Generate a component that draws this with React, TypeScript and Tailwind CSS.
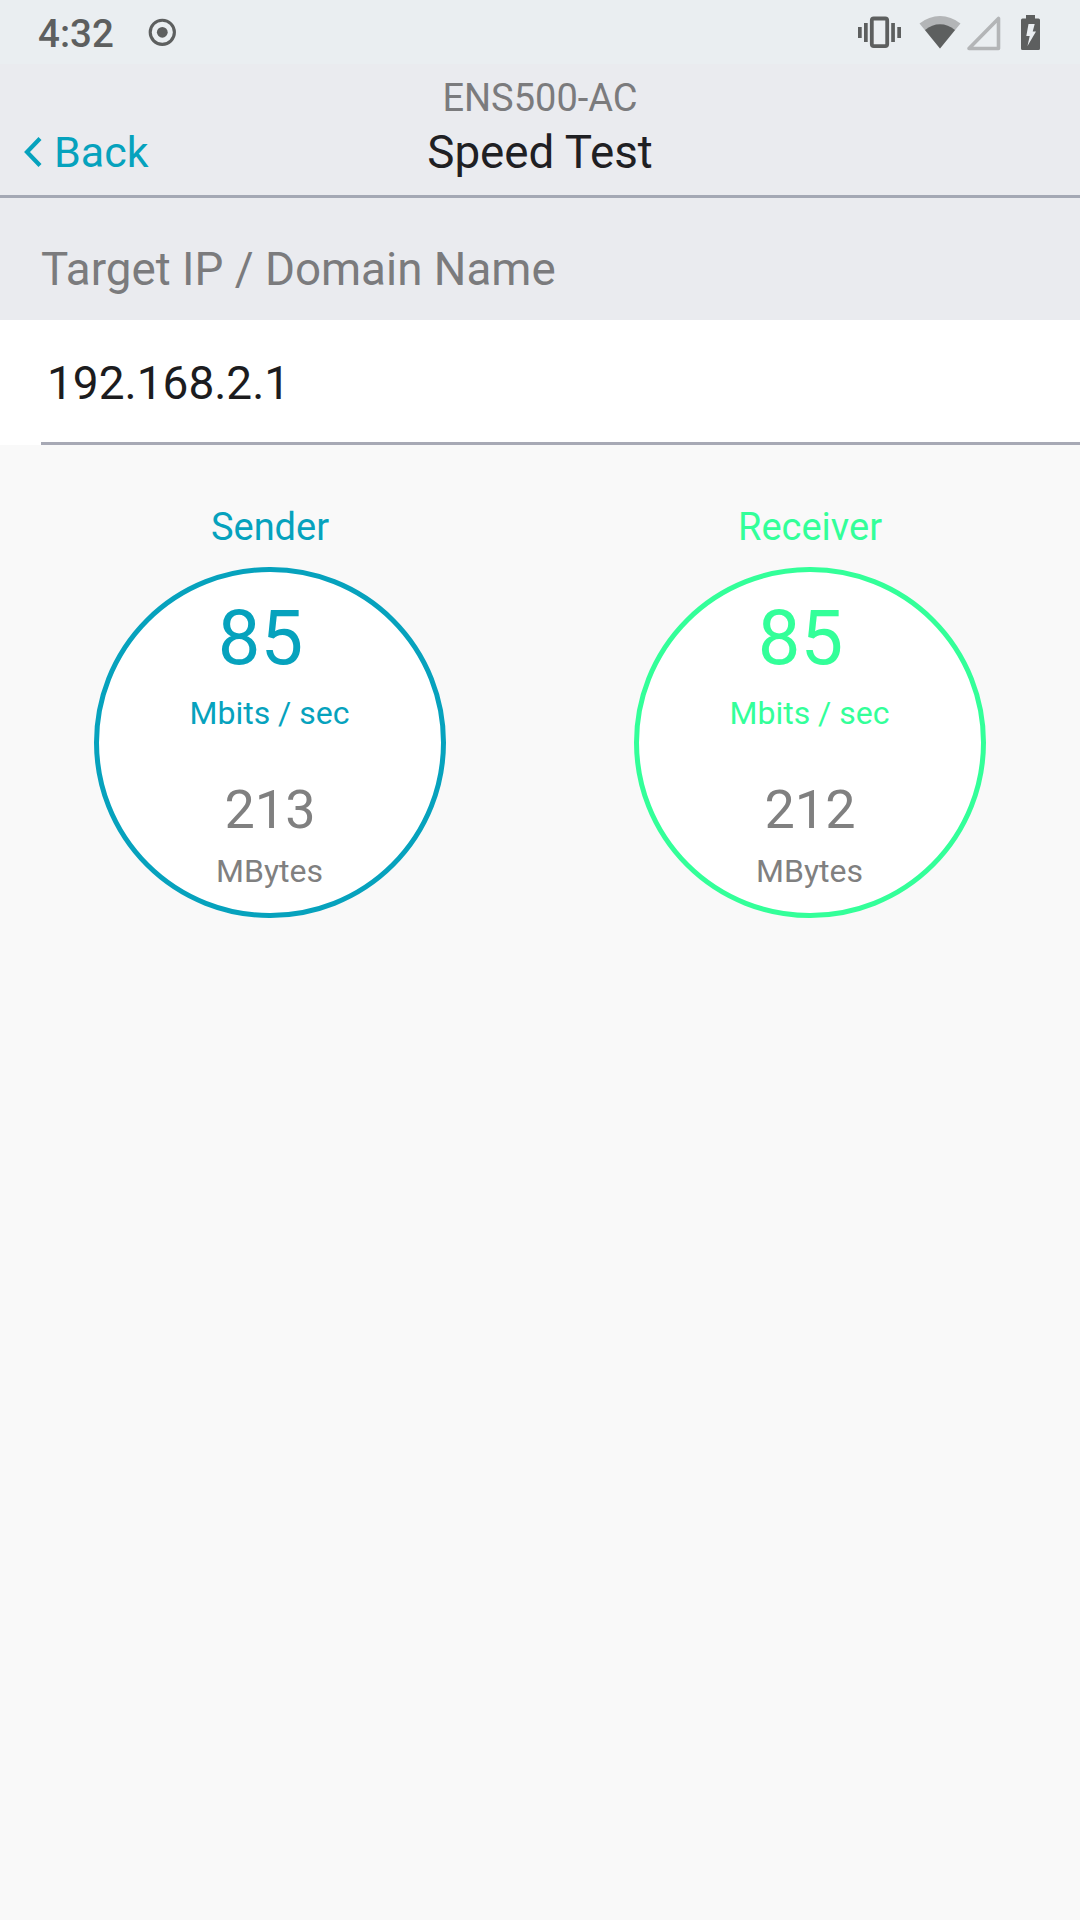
import React from 'react';

const results = [
  { title: 'Sender', rate: '85', total: '213', text: 'text-[#06a2bd]', border: 'border-[#06a2bd]' },
  { title: 'Receiver', rate: '85', total: '212', text: 'text-[#33ff99]', border: 'border-[#33ff99]' },
];

function StatusBar() {
  return (
    <div className="flex h-16 items-start bg-[#eaeef1] pl-[38px] pr-[40px] text-[#5d5f5f]">
      <span className="mt-[12px] text-[38.5px] font-medium leading-[44px]">4:32</span>
      <svg className="ml-[34px] mt-[18px]" width="28" height="28" viewBox="0 0 28 28">
        <circle cx="14.3" cy="14.3" r="12.1" fill="none" stroke="currentColor" strokeWidth="3.1" />
        <circle cx="14.3" cy="14.3" r="5.4" fill="currentColor" />
      </svg>

      <div className="ml-auto flex">
        {/* Vibrate */}
        <svg width="44" height="64" viewBox="858 0 44 64" fill="currentColor">
          <rect x="871.8" y="18.5" width="15.4" height="27.6" rx="2" fill="none" stroke="currentColor" strokeWidth="3.8" />
          <rect x="864" y="23" width="3.7" height="19" />
          <rect x="891.2" y="23" width="3.7" height="19" />
          <rect x="858" y="27" width="3.7" height="11" />
          <rect x="897.3" y="27" width="3.7" height="11" />
        </svg>
        {/* Wifi */}
        <svg className="ml-[17px]" width="42" height="64" viewBox="919 0 42 64">
          <path d="M940 48.5 L919.5 23.5 Q929 16 940 16 T960.5 23.5 Z" fill="#b3b5b7" />
          <path d="M940 48.5 L925 30 Q932 24.2 940 24.2 T955 30 Z" fill="currentColor" />
        </svg>
        {/* Cell signal */}
        <svg className="ml-[5px]" width="35" height="64" viewBox="966 0 35 64">
          <path d="M969 48.5 L998.5 18.5 V48.5 Z" fill="none" stroke="#b3b5b7" strokeWidth="3.6" strokeLinejoin="round" />
        </svg>
        {/* Battery */}
        <svg className="ml-[19px]" width="20" height="64" viewBox="1020 0 20 64">
          <path d="M1026 15h9v3.5h3.5q1.5 0 1.5 1.5v28.5q0 1.5-1.5 1.5h-16q-1.5 0-1.5-1.5v-28.5q0-1.5 1.5-1.5h3.5z" fill="currentColor" />
          <path d="M1028.5 24h6.2l-2 7.5h3.3l-8.5 14.5 2.2-10h-3.4z" fill="#eaeef1" />
        </svg>
      </div>
    </div>
  );
}

function Header() {
  return (
    <div className="grid h-[134px] grid-cols-3 items-end border-b-[3px] border-[#a4a8b4] bg-[#eaebef]">
      <button className="flex items-center pb-[18px] pl-[24px] text-[#06a2bd]">
        <svg width="18" height="32" viewBox="0 0 18 32">
          <path d="M16 2.5 L3 16 L16 29.5" fill="none" stroke="currentColor" strokeWidth="4.2" />
        </svg>
        <span className="ml-[12px] text-[43px] leading-[50px]">Back</span>
      </button>
      <div className="flex flex-col items-center pb-[15px]">
        <span className="text-[38px] leading-[44px] text-[#7b7b7d]">ENS500-AC</span>
        <h1 className="mt-[6px] text-[45.75px] leading-[54px] text-[#1f2023]">Speed Test</h1>
      </div>
    </div>
  );
}

export default function App() {
  return (
    <div className="min-h-[1920px] w-[1080px] overflow-hidden bg-[#f9f9f9] font-['Roboto',sans-serif]">
      <StatusBar />
      <Header />

      <div className="h-[122px] bg-[#eaebef] pl-[41px] pt-[45px] text-[45.75px] leading-[54px] text-[#7b7b7d]">
        Target IP / Domain Name
      </div>
      <div className="h-[125px] bg-white pl-[41px]">
        <div className="h-full border-b-[3px] border-[#a7a9b5] pl-[6px] pt-[36px] text-[46px] leading-[54px] text-[#1c1c1e]">
          192.168.2.1
        </div>
      </div>

      <div className="grid grid-cols-2 pt-[60px]">
        {results.map((r) => (
          <div key={r.title} className="flex flex-col items-center">
            <span className={`text-[38px] leading-[44px] ${r.text}`}>{r.title}</span>
            <div className={`mt-[18px] flex h-[351px] w-[352px] flex-col items-center rounded-full border-[5px] bg-white ${r.border}`}>
              <span className={`mt-[21px] pr-[19px] text-[76px] leading-[90px] ${r.text}`}>{r.rate}</span>
              <span className={`mt-[11px] pr-px text-[32px] leading-[38px] ${r.text}`}>Mbits / sec</span>
              <span className="mt-[46px] text-[54px] leading-[64px] text-[#808080]">{r.total}</span>
              <span className="mt-[10px] pr-px text-[32px] leading-[38px] text-[#808080]">MBytes</span>
            </div>
          </div>
        ))}
      </div>
    </div>
  );
}
